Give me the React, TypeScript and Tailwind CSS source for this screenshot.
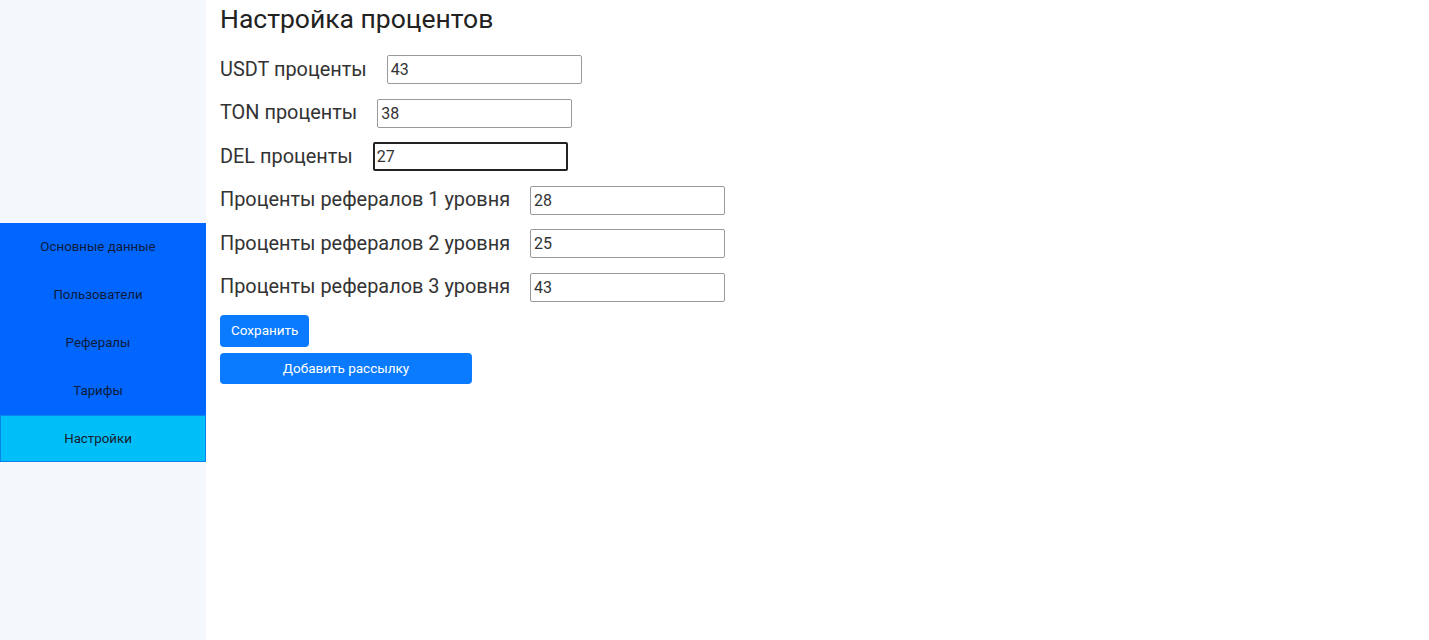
import { useState } from 'react';

const navItems = ['Основные данные', 'Пользователи', 'Рефералы', 'Тарифы', 'Настройки'];

const fields = [
  { label: 'USDT проценты', value: '43' },
  { label: 'TON проценты', value: '38' },
  { label: 'DEL проценты', value: '27', focused: true },
  { label: 'Проценты рефералов 1 уровня', value: '28' },
  { label: 'Проценты рефералов 2 уровня', value: '25' },
  { label: 'Проценты рефералов 3 уровня', value: '43' },
];

export default function App() {
  const [values, setValues] = useState(fields.map((f) => f.value));
  const active = 'Настройки';

  return (
    <div className="flex min-h-[640px] w-full bg-white font-['Roboto',sans-serif] text-[#212529]">
      {/* Sidebar */}
      <aside className="w-[206px] shrink-0 bg-[#f4f7fb] pt-[223px]">
        <nav className="flex flex-col">
          {navItems.map((item) =>
            item === active ? (
              <div
                key={item}
                className="flex h-[47px] items-center justify-center border border-[#0a84e8] bg-[#00bff8] pr-[10px] text-[13.3px] text-[#1a1a2e]"
              >
                {item}
              </div>
            ) : (
              <div
                key={item}
                className="flex h-[48px] items-center justify-center bg-[#0066ff] pr-[10px] text-[13.3px] text-[#0d1b3a]"
              >
                {item}
              </div>
            )
          )}
        </nav>
      </aside>

      {/* Main */}
      <main className="flex-1 pl-[14px] pt-[3px]">
        <h1 className="text-[26.5px] leading-[32px] text-[#222]">Настройка процентов</h1>

        <div className="mt-[20px] flex flex-col gap-[14.5px]">
          {fields.map((f, i) => (
            <div key={f.label} className="flex h-[29px] items-center">
              <label className="text-[19.9px] text-[#333]">{f.label}</label>
              <input
                value={values[i]}
                onChange={(e) => {
                  const next = [...values];
                  next[i] = e.target.value;
                  setValues(next);
                }}
                className={
                  f.focused
                    ? 'ml-[20px] h-[29px] w-[195px] rounded-[2px] border-2 border-[#222] px-[2px] text-[16px] text-[#333] outline-none'
                    : 'ml-[20px] h-[29px] w-[195px] rounded-[2px] border border-[#9a9a9a] px-[3px] text-[16px] text-[#333] outline-none'
                }
              />
            </div>
          ))}
        </div>

        <div className="mt-[13px] flex flex-col items-start gap-[6px]">
          <button className="h-[32px] rounded-[4px] bg-[#0a7bff] px-[11px] text-[13.5px] text-white">
            Сохранить
          </button>
          <button className="h-[31px] w-[252px] rounded-[4px] bg-[#0a7bff] text-[13.5px] text-white">
            Добавить рассылку
          </button>
        </div>
      </main>
    </div>
  );
}
